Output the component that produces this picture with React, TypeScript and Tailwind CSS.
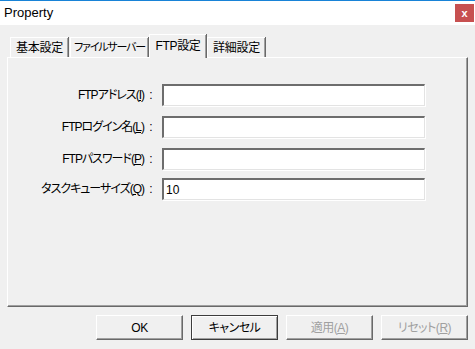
import React from "react";

const font = "font-['Liberation_Sans','Noto_Sans_CJK_JP',sans-serif] [font-feature-settings:'palt']";

function Tab({ label, selected, w, mr, tr }: { label: string; selected?: boolean; w: string; mr: string; tr: string }) {
  if (selected) {
    return (
      <div className={`relative z-10 -mb-px flex h-[24px] ${w} ${mr} ${tr} items-center justify-center whitespace-nowrap border-l border-t border-white bg-[#f0f0f0] pb-[2px] text-black shadow-[inset_-1px_0_0_#a0a0a0,1px_0_0_#696969]`}>
        {label}
      </div>
    );
  }
  return (
    <div className={`flex h-[20px] ${w} ${mr} ${tr} items-center justify-center overflow-hidden whitespace-nowrap border-l border-t border-white bg-[#f0f0f0] text-black shadow-[inset_-1px_0_0_#a0a0a0,1px_0_0_#696969]`}>
      {label}
    </div>
  );
}

function Row({ pre, key1, value, mt }: { pre: string; key1: string; value?: string; mt: string }) {
  return (
    <div className={`flex items-center ${mt}`}>
      <div className="flex w-[150px] items-center justify-end whitespace-nowrap text-[12px] text-black">
        <span className="tracking-[-1px]">
          {pre}(<span className="underline">{key1}</span>)
        </span>
        <span className="inline-block w-[14px] text-center">:</span>
      </div>
      <div className="ml-[4px] flex h-[22px] w-[263px] items-center border-l-2 border-t-2 border-l-[#6d6d6d] border-t-[#6d6d6d] border-r border-b border-r-[#e3e3e3] border-b-[#e3e3e3] bg-white pl-[2px] text-[12px] text-black shadow-[1px_1px_0_#ffffff]">
        {value}
      </div>
    </div>
  );
}

function Btn({ children, disabled, def }: { children: React.ReactNode; disabled?: boolean; def?: boolean }) {
  return (
    <div
      className={`flex h-[25px] w-[87px] items-center justify-center text-[12px] tracking-[-0.5px] ${
        disabled ? "text-[#a0a0a0]" : "text-black"
      } ${
        def
          ? "border border-[#3c3c3c] shadow-[inset_1px_1px_0_#ffffff,inset_-1px_-1px_0_#a0a0a0]"
          : "border-l border-t border-white border-r border-b border-r-[#696969] border-b-[#696969] shadow-[inset_-1px_-1px_0_#a0a0a0]"
      } bg-[#f0f0f0]`}
    >
      {children}
    </div>
  );
}

export default function App() {
  return (
    <div className={`flex h-[349px] w-[475px] flex-col overflow-hidden bg-[#f0f0f0] ${font}`}>
      <div className="flex h-[25px] items-start justify-between border-t border-[#1883d7] bg-white">
        <div className="pl-[4px] pt-[4px] text-[13px] leading-[16px] text-black">Property</div>
        <div className="mr-[1px] mt-[3px] flex h-[18px] w-[19px] items-center justify-center bg-[#c75050] text-[11px] font-bold leading-none text-white">
          x
        </div>
      </div>
      <div className="mt-[9px] flex h-[23px] items-end pl-[10px]">
        <Tab label="基本設定" w="w-[58px]" mr="mr-[2px]" tr="text-[12px] tracking-[-0.3px]" />
        <Tab label="ファイルサーバー" w="w-[78px]" mr="mr-[1px]" tr="text-[11px] tracking-[-1.2px]" />
        <Tab label="FTP設定" selected w="w-[57px]" mr="mr-[1px]" tr="text-[12px] tracking-[-0.3px]" />
        <Tab label="詳細設定" w="w-[58px]" mr="" tr="text-[12px] tracking-[-0.3px]" />
      </div>
      <div className="mx-[7px] flex h-[250px] w-[461px] flex-col border-l border-t border-white border-r border-b border-r-[#696969] border-b-[#696969] pt-[26px] shadow-[inset_-1px_-1px_0_#a0a0a0]">
        <Row pre="FTPアドレス" key1="I" mt="" />
        <Row pre="FTPログイン名" key1="L" mt="mt-[10px]" />
        <Row pre="FTPパスワード" key1="P" mt="mt-[10px]" />
        <Row pre="タスクキューサイズ" key1="Q" value="10" mt="mt-[8px]" />
      </div>
      <div className="mt-[8px] flex justify-end gap-[8px] pr-[7px]">
        <Btn>OK</Btn>
        <Btn def>キャンセル</Btn>
        <Btn disabled>
          適用(<span className="underline">A</span>)
        </Btn>
        <Btn disabled>
          リセット(<span className="underline">R</span>)
        </Btn>
      </div>
    </div>
  );
}
